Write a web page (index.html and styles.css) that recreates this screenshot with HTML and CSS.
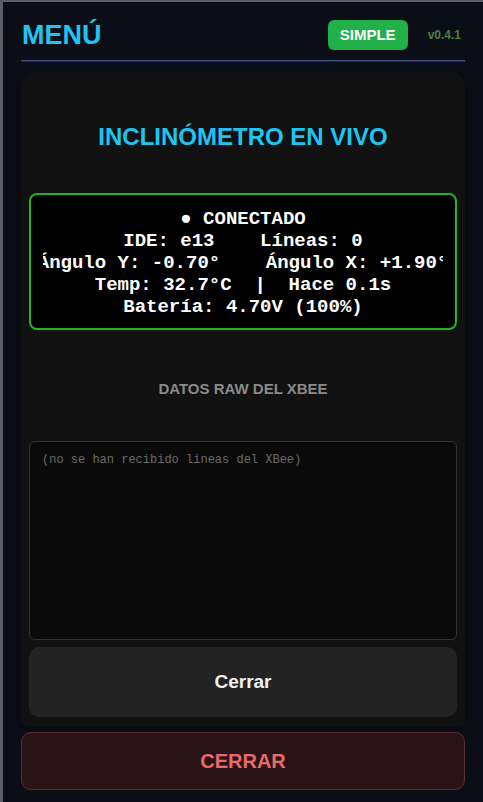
FILE: index.html
```html
<!DOCTYPE html>
<html lang="es">
<head>
<meta charset="utf-8">
<title>Menú</title>
<link rel="stylesheet" href="styles.css">
</head>
<body>
<div class="panel">
  <header class="header">
    <h1 class="title">MENÚ</h1>
    <div class="header-right">
      <button class="mode-btn">SIMPLE</button>
      <span class="version">v0.4.1</span>
    </div>
  </header>
  <div class="sep"></div>
  <section class="card">
    <h2 class="card-title">INCLINÓMETRO EN VIVO</h2>
    <div class="status">
      <div class="line">● CONECTADO</div>
      <div class="line">IDE: e13    Líneas: 0</div>
      <div class="line">Ángulo Y: -0.70°    Ángulo X: +1.90°</div>
      <div class="line">Temp: 32.7°C  |  Hace 0.1s</div>
      <div class="line">Batería: 4.70V (100%)</div>
    </div>
    <h3 class="raw-label">DATOS RAW DEL XBEE</h3>
    <div class="log">(no se han recibido lineas del XBee)</div>
    <button class="close-btn">Cerrar</button>
  </section>
  <button class="close-main">CERRAR</button>
</div>
</body>
</html>
```
FILE: styles.css
```css
* { box-sizing: border-box; }
html, body { margin: 0; padding: 0; }
body {
  background: #5c5e63;
  font-family: "Liberation Sans", Arial, sans-serif;
  height: 802px;
  overflow: hidden;
}
.panel {
  margin: 2px 0 0 3px;
  height: 800px;
  background: #0b0e17;
  padding: 17px 18px 0 18px;
  display: flex;
  flex-direction: column;
}
.header {
  display: flex;
  align-items: center;
  justify-content: space-between;
  height: 31px;
}
.title {
  margin: 0 0 0 1px;
  font-size: 27px;
  font-weight: 700;
  color: #1ec5f1;
  line-height: 30px;
}
.header-right {
  display: flex;
  align-items: center;
  gap: 20px;
  padding-right: 4px;
}
.mode-btn {
  height: 30px;
  padding: 0 12px;
  border: none;
  border-radius: 6px;
  background: #22b04b;
  color: #fff;
  font-family: "Liberation Sans", Arial, sans-serif;
  font-weight: 700;
  font-size: 15px;
}
.version {
  font-size: 12px;
  font-weight: 700;
  color: #4f7d47;
}
.sep {
  margin-top: 10px;
  height: 2px;
  border-top: 1px solid #44527f;
  border-bottom: 1px solid #1c2440;
}
.card {
  margin-top: 10px;
  background: #111111;
  border-radius: 14px 14px 6px 6px;
  padding: 8px 8px 9px;
  box-shadow: 0 2px 10px rgba(0, 0, 0, 0.45);
  display: flex;
  flex-direction: column;
}
.card-title {
  margin: 43px 0 0;
  text-align: center;
  font-size: 24px;
  line-height: 28px;
  font-weight: 700;
  color: #1ec5f1;
}
.status {
  margin-top: 42px;
  background: #000;
  border: 2px solid #22b422;
  border-radius: 8px;
  padding: 13px 12px 10px;
}
.line {
  display: flex;
  justify-content: center;
  overflow: hidden;
  white-space: pre;
  font-family: "Liberation Mono", "Cousine", monospace;
  font-weight: 700;
  font-size: 19px;
  line-height: 22px;
  color: #fff;
}
.raw-label {
  margin: 50px 0 0;
  text-align: center;
  font-size: 15px;
  line-height: 18px;
  font-weight: 700;
  color: #8a8a8a;
}
.log {
  margin-top: 43px;
  height: 199px;
  background: #0a0a0a;
  border: 1px solid #333;
  border-radius: 6px;
  padding: 10px 12px;
  font-family: "Liberation Mono", monospace;
  font-size: 12px;
  line-height: 16px;
  color: #6a6a6a;
}
.close-btn {
  margin-top: 7px;
  height: 70px;
  border: none;
  border-radius: 10px;
  background: #232323;
  color: #f2f2f2;
  font-family: "Liberation Sans", Arial, sans-serif;
  font-weight: 700;
  font-size: 19px;
}
.close-main {
  margin-top: 6px;
  height: 58px;
  border: 1px solid #5a2e35;
  border-radius: 10px;
  background: #2a1316;
  color: #e86b6b;
  font-family: "Liberation Sans", Arial, sans-serif;
  font-weight: 700;
  font-size: 20px;
}
```
